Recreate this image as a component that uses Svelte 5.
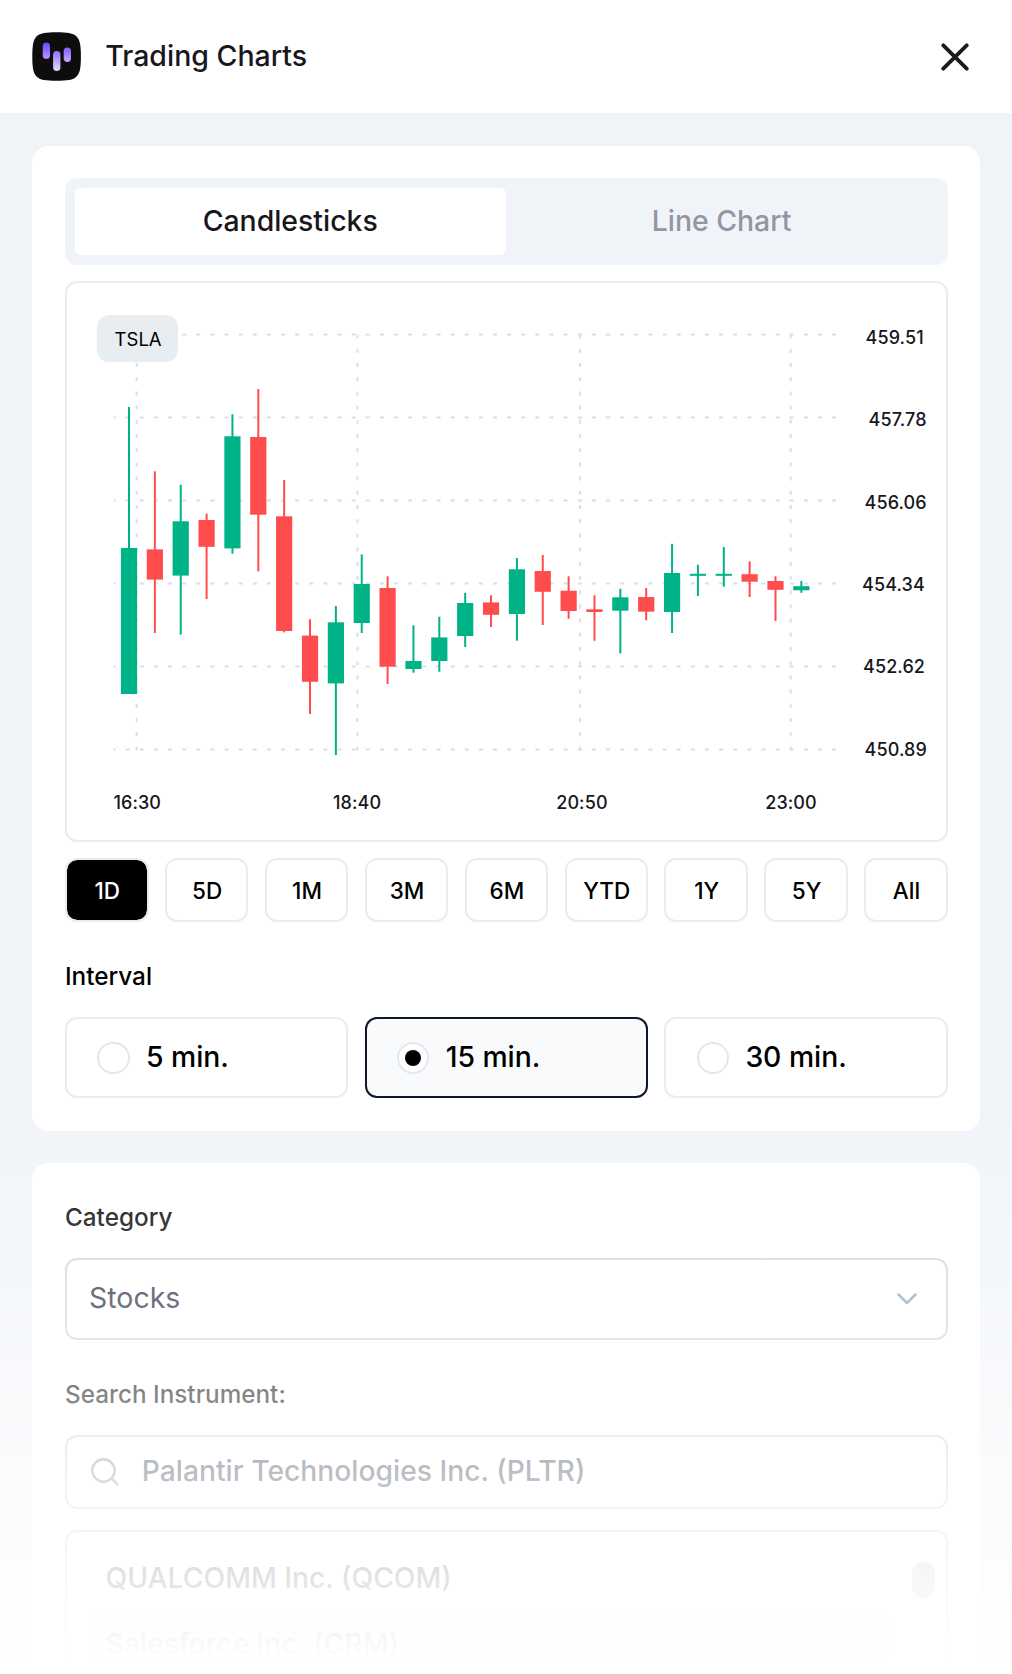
<script lang="ts">
  type Candle = [number, number, number, number, boolean];

  const tabs = ['Candlesticks', 'Line Chart'];
  const ranges = ['1D', '5D', '1M', '3M', '6M', 'YTD', '1Y', '5Y', 'All'];
  const intervals = ['5 min.', '15 min.', '30 min.'];
  const instruments = ['QUALCOMM Inc. (QCOM)', 'Salesforce Inc. (CRM)'];

  let activeTab = $state('Candlesticks');
  let activeRange = $state('1D');
  let activeInterval = $state('15 min.');

  const firstCandle = 129;
  const candleStep = 25.86;

  // high, body top, body bottom, low, rising
  const candles: Candle[] = [
    [407, 548, 694, 694, true],
    [471.3, 549.4, 579.6, 633, false],
    [484.7, 521.3, 575.6, 634.6, true],
    [513.7, 520, 546.8, 599, false],
    [414.3, 436.3, 548.4, 553.7, true],
    [389, 437, 514.7, 571.4, false],
    [480, 516.3, 631, 632.4, false],
    [619.2, 635.6, 681.8, 714, false],
    [606, 622.3, 683.4, 755, true],
    [554.4, 584, 623, 633, true],
    [576.3, 588, 666.7, 684, false],
    [625.3, 661, 669, 672.7, true],
    [616.7, 637.4, 661, 671.8, true],
    [592.8, 603, 636, 647, true],
    [595.2, 602.4, 614.8, 627, false],
    [558, 569.3, 614, 640.7, true],
    [555, 571, 591.8, 625, false],
    [576.3, 590.7, 611, 618.7, false],
    [595.2, 609.3, 612, 640.8, false],
    [588.7, 597.3, 610.7, 653.4, true],
    [588, 597, 611.7, 620.3, false],
    [543.8, 573, 612, 633, true],
    [564.7, 573.8, 575.8, 596, true],
    [547, 573.8, 575.8, 586.7, true],
    [561.3, 574.2, 581.7, 597, false],
    [576.3, 581, 589.8, 620.8, false],
    [581, 586.2, 590.3, 592.8, true]
  ];

  const prices = [
    { label: '459.51', x: 865.5, line: 334.6, y: 343.8 },
    { label: '457.78', x: 868.5, line: 417.6, y: 426.2 },
    { label: '456.06', x: 864.5, line: 500.6, y: 508.6 },
    { label: '454.34', x: 862, line: 583.6, y: 591 },
    { label: '452.62', x: 863, line: 666.6, y: 673.4 },
    { label: '450.89', x: 864.5, line: 749.6, y: 755.8 }
  ];

  const times = [
    { label: '16:30', x: 113.4, line: 136.6 },
    { label: '18:40', x: 333, line: 357.4 },
    { label: '20:50', x: 556.2, line: 580 },
    { label: '23:00', x: 765.2, line: 790.7 }
  ];
</script>

<div class="page">
  <header class="header">
    <svg class="logo" width="49" height="49" viewBox="0 0 49 49" fill="none">
      <defs>
        <linearGradient id="bars" x1="0" y1="10" x2="0" y2="39" gradientUnits="userSpaceOnUse">
          <stop stop-color="#6f3dff" />
          <stop offset="1" stop-color="#e6dcff" />
        </linearGradient>
      </defs>
      <path d="M0.300 24.500C0.300 3.500 3.500 0.300 24.500 0.300S48.900 3.500 48.900 24.500 45.500 48.800 24.500 48.800 0.300 45.500 0.300 24.500Z" fill="#0d0d0e" />
      <rect x="10.700" y="10.500" width="7.300" height="16.300" rx="3.650" fill="url(#bars)" />
      <rect x="21.100" y="19" width="7.300" height="20" rx="3.650" fill="url(#bars)" />
      <rect x="31.700" y="15.500" width="7.300" height="14.500" rx="3.650" fill="url(#bars)" />
    </svg>
    <h1>Trading Charts</h1>
    <button class="close" aria-label="Close">
      <svg width="28" height="28" viewBox="0 0 28 28" fill="none">
        <path d="M2.300 2.300L25.700 25.700M25.700 2.300L2.300 25.700" stroke="#1a1a1f" stroke-width="3.800" stroke-linecap="round" />
      </svg>
    </button>
  </header>

  <main class="content">
    <section class="card chart-card">
      <div class="tabs">
        {#each tabs as tab}
          <button class="tab" class:active={tab === activeTab} onclick={() => (activeTab = tab)}>{tab}</button>
        {/each}
      </div>

      <div class="chart">
        <svg width="879" height="557" viewBox="67 283 879 557">
          {#each prices as price}
            <line class="grid grid-row" x1="113.500" x2="837" y1={price.line} y2={price.line} />
          {/each}
          {#each times as time}
            <line class="grid" x1={time.line} x2={time.line} y1="334.600" y2="750.500" />
          {/each}

          {#each candles as [high, top, bottom, low, up], i}
            {@const x = firstCandle + i * candleStep}
            <g class={up ? 'up' : 'down'}>
              <rect x={x - 1} y={high} width="2" height={low - high} />
              <rect x={x - 8.1} y={top} width="16.200" height={bottom - top} />
            </g>
          {/each}

          {#each prices as price}
            <text class="axis" x={price.x} y={price.y}>{price.label}</text>
          {/each}
          {#each times as time}
            <text class="axis" x={time.x} y="809.300">{time.label}</text>
          {/each}

          <rect class="badge" x="97" y="315" width="81" height="47" rx="12" />
          <text class="symbol" x="114.600" y="346">TSLA</text>
        </svg>
      </div>

      <div class="ranges">
        {#each ranges as range}
          <button class="range" class:active={range === activeRange} onclick={() => (activeRange = range)}>{range}</button>
        {/each}
      </div>

      <h2>Interval</h2>
      <div class="intervals">
        {#each intervals as interval}
          <button class="interval" class:active={interval === activeInterval} onclick={() => (activeInterval = interval)}>
            <span class="radio"></span>
            <span class="interval-label">{interval}</span>
          </button>
        {/each}
      </div>
    </section>

    <section class="card filter-card">
      <h2>Category</h2>
      <div class="select">
        <span>Stocks</span>
        <svg width="22" height="14" viewBox="0 0 22 14" fill="none">
          <path d="M2.500 2.500L11 11L19.500 2.500" stroke="#8a9bb5" stroke-width="2.500" stroke-linecap="round" stroke-linejoin="round" />
        </svg>
      </div>

      <h2 class="search-label">Search Instrument:</h2>
      <div class="search">
        <svg width="28" height="28" viewBox="0 0 28 28" fill="none">
          <circle cx="12.500" cy="12.500" r="11.200" stroke="#8f9197" stroke-width="2.400" />
          <path d="M20.500 20.500L26.500 26.500" stroke="#8f9197" stroke-width="2.400" stroke-linecap="round" />
        </svg>
        <span>Palantir Technologies Inc. (PLTR)</span>
      </div>

      <div class="list">
        <ul>
          {#each instruments as instrument, i}
            <li class:hovered={i === 1}>{instrument}</li>
          {/each}
        </ul>
        <div class="thumb"></div>
      </div>
    </section>
  </main>

  <div class="fade"></div>
</div>

<style>
  :global(body) {
    margin: 0;
    background: #fff;
  }

  .page {
    position: relative;
    width: 1012px;
    height: 1674px;
    overflow: hidden;
    background: #f0f4f9;
    font-family: Inter, 'Liberation Sans', sans-serif;
  }

  button {
    padding: 0;
    font-family: inherit;
    cursor: pointer;
  }

  .header {
    box-sizing: border-box;
    display: flex;
    align-items: center;
    height: 113.300px;
    padding: 0 43px 0 32.300px;
    background: #fff;
  }

  h1 {
    flex: 1;
    margin: 0 0 2px 24px;
    font-size: 28.500px;
    font-weight: 500;
    line-height: 36px;
    color: #17171c;
  }

  .close {
    display: flex;
    border: none;
    background: none;
  }

  .content {
    display: flex;
    flex-direction: column;
    gap: 32.300px;
    padding: 32.300px;
  }

  .card {
    box-sizing: border-box;
    padding: 32.500px 32px 32px 32.700px;
    border-radius: 16px;
    background: #fff;
  }

  .chart-card {
    height: 985px;
  }

  .tabs {
    box-sizing: border-box;
    display: flex;
    height: 86.700px;
    padding: 10px;
    border-radius: 12px;
    background: #f0f4f9;
  }

  .tab {
    flex: 1;
    border: none;
    border-radius: 6px;
    background: none;
    padding: 0 1px 2px 0;
    font-size: 28.400px;
    font-weight: 500;
    color: #9296a3;
  }

  .tab.active {
    background: #fff;
    color: #17171c;
  }

  .chart {
    box-sizing: border-box;
    height: 561px;
    margin-top: 16px;
    border: 2px solid #e8edf2;
    border-radius: 12px;
  }

  .chart svg {
    display: block;
  }

  .grid {
    stroke: #d6e0eb;
    stroke-width: 2;
    stroke-dasharray: 4 10.200;
  }

  .grid-row {
    stroke-dasharray: 4 10.130;
    stroke-dashoffset: 2;
  }

  .up {
    fill: #00b386;
  }

  .down {
    fill: #ff4d4d;
  }

  .axis {
    font-size: 18px;
    font-weight: 500;
    letter-spacing: 0.1px;
    fill: #17171c;
  }

  .badge {
    fill: #e8edf1;
  }

  .symbol {
    font-size: 18.500px;
    fill: #000;
  }

  .ranges {
    display: flex;
    gap: 16.400px;
    margin-top: 16.200px;
  }

  .range {
    flex: 1 1 0;
    box-sizing: border-box;
    height: 64.500px;
    padding-left: 1px;
    border: 2px solid #e8edf2;
    border-radius: 12px;
    background: #fff;
    font-size: 22.500px;
    font-weight: 500;
    color: #000;
  }

  .range.active {
    background: #000;
    background-clip: padding-box;
    color: #fff;
  }

  h2 {
    margin: 0;
    font-size: 24.300px;
    font-weight: 500;
    line-height: 32px;
    color: #000;
  }

  .chart-card h2 {
    margin-top: 38px;
  }

  .intervals {
    display: flex;
    gap: 16.400px;
    margin-top: 25px;
  }

  .interval {
    flex: 1 1 0;
    box-sizing: border-box;
    display: flex;
    align-items: center;
    gap: 16.200px;
    height: 81px;
    padding: 0 30.300px;
    border: 2px solid #e8edf2;
    border-radius: 12px;
    background: #fff;
    font-size: 28.300px;
    font-weight: 500;
    color: #000;
  }

  .interval-label {
    padding-bottom: 2px;
  }

  .interval.active {
    border-color: #0f172a;
    background: #f8fafc;
  }

  .radio {
    box-sizing: border-box;
    display: flex;
    align-items: center;
    justify-content: center;
    width: 32.500px;
    height: 32.500px;
    border: 2px solid #e2e8f0;
    border-radius: 50%;
    background: #fff;
  }

  .active .radio::after {
    content: '';
    width: 16.500px;
    height: 16.500px;
    border-radius: 50%;
    background: #000;
  }

  .filter-card {
    height: 600px;
    padding-top: 38px;
  }

  .select {
    box-sizing: border-box;
    display: flex;
    align-items: center;
    justify-content: space-between;
    height: 82px;
    margin-top: 25px;
    padding: 0 28px 0 22px;
    border: 2px solid #cbd5e1;
    border-radius: 12px;
    font-size: 28.500px;
    color: #1c2339;
  }

  .select span {
    padding-bottom: 2px;
  }

  .search-label {
    margin-top: 38px;
  }

  .search {
    box-sizing: border-box;
    display: flex;
    align-items: center;
    gap: 22.500px;
    height: 74px;
    margin-top: 25px;
    padding: 0 24.300px;
    border: 2px solid #cbd5e1;
    border-radius: 12px;
    font-size: 28.250px;
    font-weight: 500;
    color: #334155;
  }

  .search span {
    padding-bottom: 2px;
  }

  .list {
    box-sizing: border-box;
    display: flex;
    justify-content: space-between;
    height: 300px;
    margin-top: 21px;
    padding: 15px 11px 0 23px;
    border: 2px solid #cbd5e1;
    border-radius: 12px;
  }

  ul {
    width: 799px;
    margin: 0;
    padding: 0;
    list-style: none;
  }

  li {
    box-sizing: border-box;
    height: 66.300px;
    padding-left: 15.500px;
    border-radius: 8px;
    font-size: 28.250px;
    font-weight: 500;
    line-height: 62px;
    color: #3f4553;
  }

  li.hovered {
    background: #f1f3f6;
  }

  .thumb {
    width: 22.500px;
    height: 36.500px;
    margin-top: 15px;
    border-radius: 12px;
    background: #c5ccd6;
  }

  .fade {
    position: absolute;
    right: 0;
    bottom: 0;
    left: 0;
    height: 574px;
    background: linear-gradient(rgba(255, 255, 255, 0), #fff 98%);
    pointer-events: none;
  }
</style>
